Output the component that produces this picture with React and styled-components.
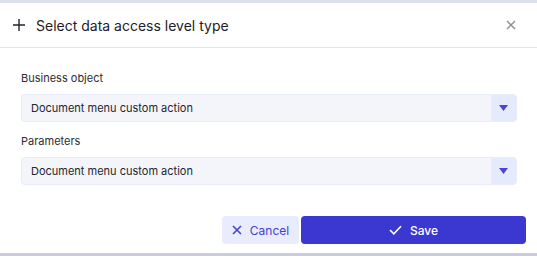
import React from 'react'
import styled, { createGlobalStyle } from 'styled-components'

const Global = createGlobalStyle`
  html, body {
    margin: 0;
    padding: 0;
    background: #c9cbdf;
  }
  body {
    font-family: Inter, "Noto Sans", sans-serif;
    color: #1f2129;
  }
`

const Backdrop = styled.div`
  width: 537px;
  height: 256px;
  background: linear-gradient(#dde1ec 0, #dde1ec 3px, #ffffff 3px, #ffffff 253px, #c9cbdf 253px);
  display: flex;
  flex-direction: column;
`

const Dialog = styled.div`
  margin-top: 3px;
  height: 250px;
  background: #ffffff;
  border-radius: 0 0 4px 4px;
  display: flex;
  flex-direction: column;
`

const Header = styled.div`
  height: 45px;
  display: flex;
  align-items: center;
  padding: 0 21px 0 13px;
  border-bottom: 1px solid #e1e4ec;
  box-sizing: border-box;
`

const Title = styled.h1`
  flex: 1;
  margin: 0 0 0 11px;
  font-size: 14px;
  font-weight: 400;
  color: #1f2129;
`

const IconButton = styled.button`
  border: none;
  background: none;
  padding: 0;
  display: flex;
  color: ${p => p.$color || '#8a8d96'};
`

const Body = styled.div`
  padding: 22px 20px 0 21px;
  display: flex;
  flex-direction: column;
`

const Field = styled.div`
  display: flex;
  flex-direction: column;
  margin-bottom: ${p => p.$last ? '0' : '11px'};
`

const Label = styled.label`
  font-size: 11px;
  line-height: 16px;
  color: #2b2d35;
  margin-bottom: 8px;
`

const Select = styled.div`
  height: 28px;
  box-sizing: border-box;
  display: flex;
  background: #f4f5fa;
  border: 1px solid #e7ebfa;
  border-radius: 4px;
  overflow: hidden;
`

const SelectValue = styled.div`
  flex: 1;
  font-size: 11px;
  display: flex;
  align-items: center;
  padding-left: 9px;
  color: #23252d;
`

const Toggle = styled.div`
  width: 25px;
  background: #e6eafd;
  display: flex;
  align-items: center;
  justify-content: center;
`

const Footer = styled.div`
  margin-top: auto;
  padding: 0 11px 9px 0;
  display: flex;
  justify-content: flex-end;
  gap: 2px;
`

const Button = styled.button`
  height: 28px;
  border: none;
  border-radius: 4px;
  display: flex;
  align-items: center;
  justify-content: center;
  gap: 8px;
  font-family: Inter, "Noto Sans", sans-serif;
  font-size: 12px;
  width: ${p => p.$width};
  background: ${p => p.$primary ? '#3b38d1' : '#e8ecfd'};
  color: ${p => p.$primary ? '#ffffff' : '#4640cf'};
  font-weight: ${p => p.$primary ? 500 : 400};
`

const Plus = () => (
  <svg width="12" height="12" viewBox="0 0 12 12">
    <path d="M6 0v12M0 6h12" stroke="#23252d" strokeWidth="1.4" />
  </svg>
)

const Cross = ({ size = 10, color = 'currentColor', w = 1.5 }) => (
  <svg width={size} height={size} viewBox="0 0 10 10">
    <path d="M1 1l8 8M9 1l-8 8" stroke={color} strokeWidth={w} />
  </svg>
)

const Check = () => (
  <svg width="13" height="10" viewBox="0 0 13 10">
    <path d="M1 5l3.8 3.8L12 1.2" stroke="#fff" strokeWidth="1.6" fill="none" />
  </svg>
)

const Caret = () => (
  <svg width="9" height="6" viewBox="0 0 9 6">
    <path d="M0 0h9L4.5 6z" fill="#4b44d9" />
  </svg>
)

const fields = [
  { label: 'Business object', value: 'Document menu custom action' },
  { label: 'Parameters', value: 'Document menu custom action' },
]

export default function App() {
  return (
    <>
      <Global />
      <Backdrop>
        <Dialog>
          <Header>
            <Plus />
            <Title>Select data access level type</Title>
            <IconButton><Cross size={10} w={1.4} /></IconButton>
          </Header>
          <Body>
            {fields.map((f, i) => (
              <Field key={f.label} $last={i === fields.length - 1}>
                <Label>{f.label}</Label>
                <Select>
                  <SelectValue>{f.value}</SelectValue>
                  <Toggle><Caret /></Toggle>
                </Select>
              </Field>
            ))}
          </Body>
          <Footer>
            <Button $width="77px"><Cross size={10} w={1.6} />Cancel</Button>
            <Button $primary $width="225px"><Check />Save</Button>
          </Footer>
        </Dialog>
      </Backdrop>
    </>
  )
}
